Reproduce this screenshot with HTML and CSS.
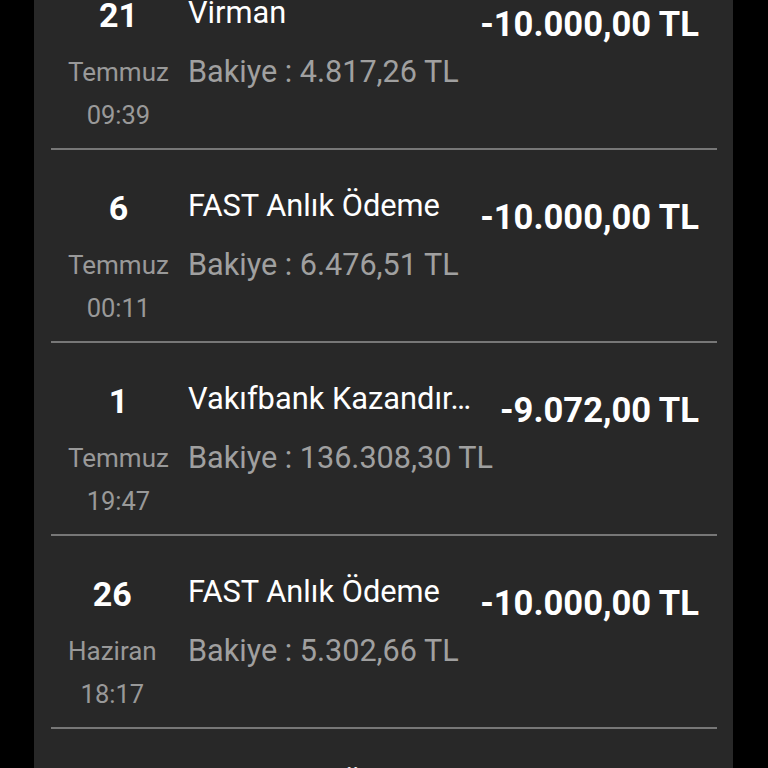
FILE: index.html
```html
<!DOCTYPE html>
<html lang="tr">
<head>
<meta charset="utf-8">
<title>Hesap Hareketleri</title>
<link rel="stylesheet" href="styles.css">
</head>
<body>
<div class="screen">
  <div class="panel">
    <ul class="list">
      <li class="row">
        <div class="date"><div class="date-inner"><span class="day">21</span><span class="month">Temmuz</span><span class="time">09:39</span></div></div>
        <div class="info"><span class="title">Virman</span><span class="balance">Bakiye : 4.817,26 TL</span></div>
        <div class="amount">-10.000,00 TL</div>
      </li>
      <li class="row">
        <div class="date"><div class="date-inner"><span class="day">6</span><span class="month">Temmuz</span><span class="time">00:11</span></div></div>
        <div class="info"><span class="title">FAST Anlık Ödeme</span><span class="balance">Bakiye : 6.476,51 TL</span></div>
        <div class="amount">-10.000,00 TL</div>
      </li>
      <li class="row">
        <div class="date"><div class="date-inner"><span class="day">1</span><span class="month">Temmuz</span><span class="time">19:47</span></div></div>
        <div class="info"><span class="title">Vakıfbank Kazandır…</span><span class="balance">Bakiye : 136.308,30 TL</span></div>
        <div class="amount">-9.072,00 TL</div>
      </li>
      <li class="row">
        <div class="date"><div class="date-inner"><span class="day">26</span><span class="month">Haziran</span><span class="time">18:17</span></div></div>
        <div class="info"><span class="title">FAST Anlık Ödeme</span><span class="balance">Bakiye : 5.302,66 TL</span></div>
        <div class="amount">-10.000,00 TL</div>
      </li>
      <li class="row">
        <div class="date"><div class="date-inner"><span class="day">24</span><span class="month">Haziran</span><span class="time">12:05</span></div></div>
        <div class="info"><span class="title">FAST Anlık Ödeme</span><span class="balance">Bakiye : 15.302,66 TL</span></div>
        <div class="amount">-10.000,00 TL</div>
      </li>
    </ul>
  </div>
</div>
</body>
</html>
```

FILE: styles.css
```css
html, body {
  margin: 0;
  padding: 0;
  background: #000;
}
body {
  font-family: Roboto, "Noto Sans", "Liberation Sans", sans-serif;
}
.screen {
  width: 768px;
  height: 768px;
  overflow: hidden;
  display: flex;
  justify-content: flex-start;
}
.panel {
  margin-left: 34px;
  width: 699px;
  height: 768px;
  background: #282828;
  overflow: hidden;
}
.list {
  list-style: none;
  margin: -43px 0 0 0;
  padding: 0 16px 0 17px;
}
.row {
  display: flex;
  align-items: flex-start;
  height: 193px;
  box-sizing: border-box;
  padding-top: 40px;
  border-bottom: 2px solid #777777;
}
.date {
  width: 120px;
  padding-left: 17px;
  margin-top: -1px;
  display: flex;
  flex-direction: column;
  align-items: flex-start;
  flex-shrink: 0;
}
.date-inner {
  display: flex;
  flex-direction: column;
  align-items: center;
}
.day {
  font-size: 34px;
  line-height: 38px;
  font-weight: 700;
  color: #ffffff;
}
.month {
  margin-top: 23px;
  font-size: 26px;
  line-height: 30px;
  color: #999999;
}
.time {
  margin-top: 13px;
  font-size: 25.5px;
  line-height: 30px;
  color: #999999;
}
.info {
  flex: 1;
  min-width: 0;
  display: flex;
  flex-direction: column;
  margin-top: -2px;
}
.title {
  font-size: 30.8px;
  line-height: 36px;
  color: #ffffff;
  white-space: nowrap;
}
.balance {
  margin-top: 23px;
  font-size: 30.6px;
  line-height: 36px;
  color: #a0a0a0;
  white-space: nowrap;
}
.amount {
  margin-top: 8px;
  padding-right: 18px;
  font-size: 34.6px;
  line-height: 38px;
  font-weight: 700;
  color: #ffffff;
  white-space: nowrap;
}
```
